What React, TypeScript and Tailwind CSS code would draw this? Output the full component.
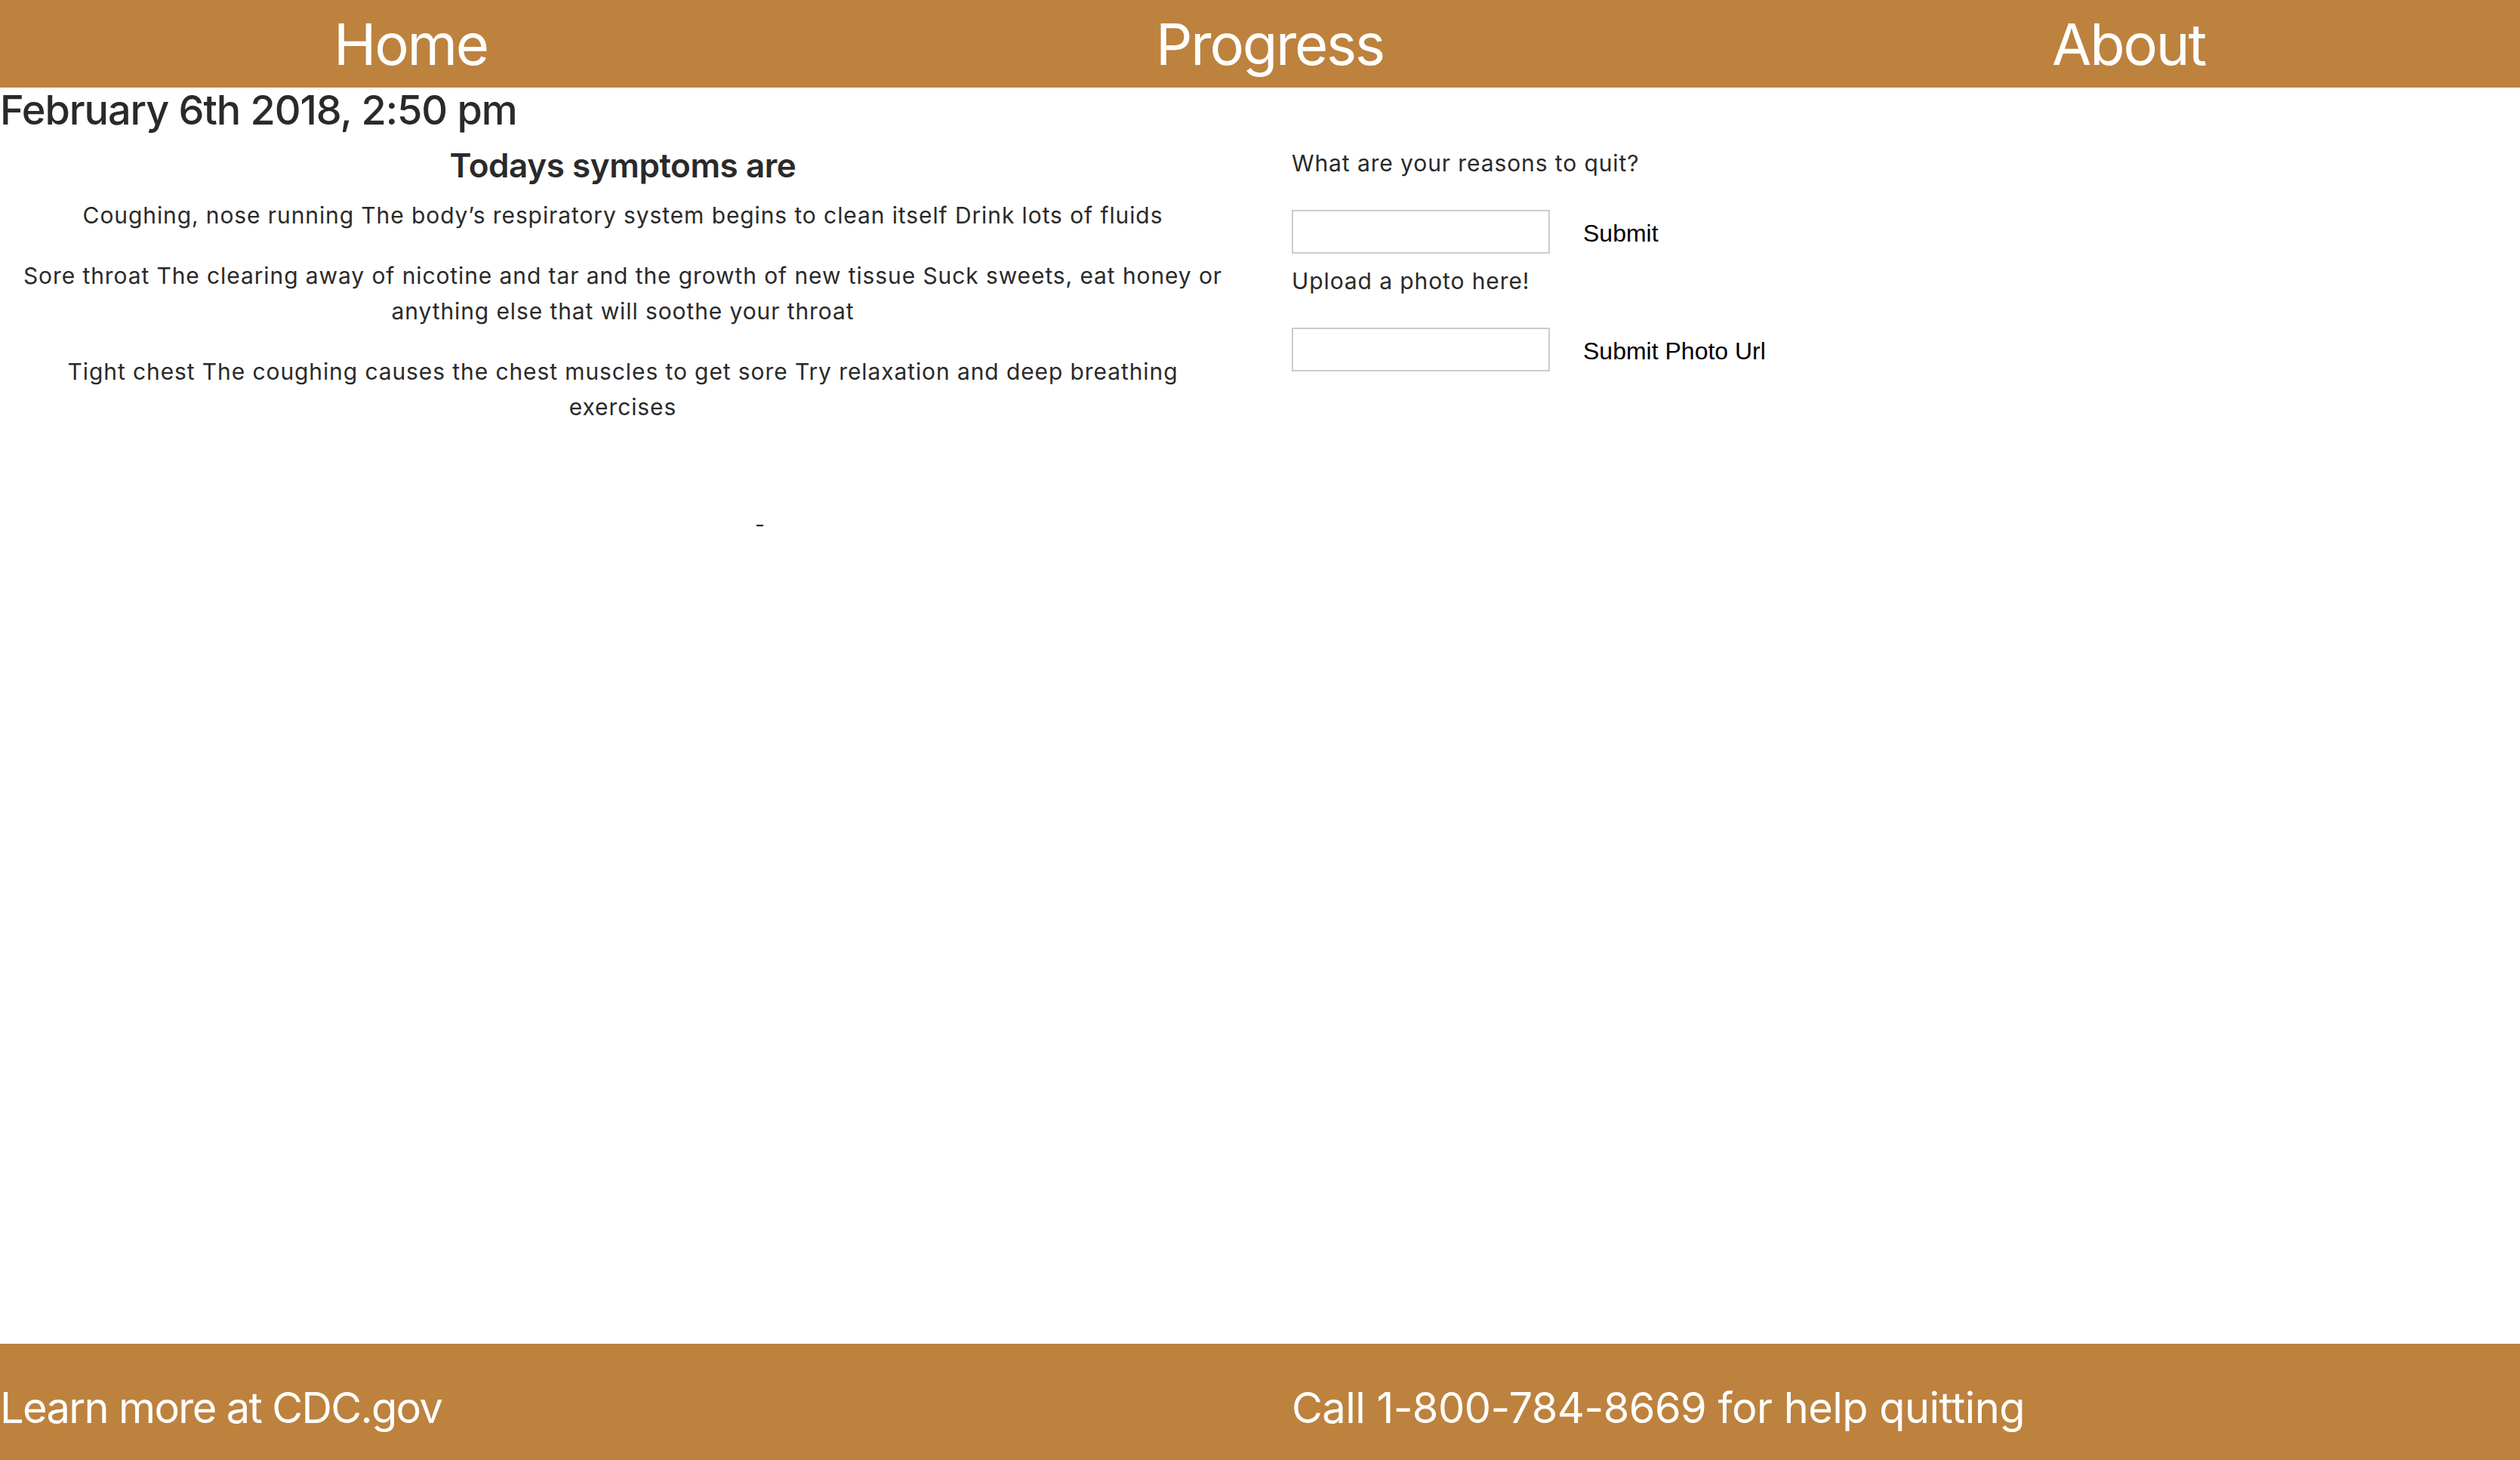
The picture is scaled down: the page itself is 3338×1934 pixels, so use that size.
import React from 'react';

const symptoms = [
  'Coughing, nose running The body’s respiratory system begins to clean itself Drink lots of fluids',
  'Sore throat The clearing away of nicotine and tar and the growth of new tissue Suck sweets, eat honey or anything else that will soothe your throat',
  'Tight chest The coughing causes the chest muscles to get sore Try relaxation and deep breathing exercises',
];

const App: React.FC = () => {
  return (
    <div className="min-h-screen flex flex-col bg-white text-[#2a2a2a] font-['Inter',sans-serif]">
      {/* Nav */}
      <nav className="h-[116px] bg-[#bd823e] flex items-center justify-between pl-[442px] pr-[417px] text-white text-[76px] leading-none tracking-[-0.03em]">
        <a href="#">Home</a>
        <a href="#">Progress</a>
        <a href="#">About</a>
      </nav>

      <main className="flex-1">
        <div className="text-[54px] leading-[60px] font-medium tracking-[-0.02em]">February 6th 2018, 2:50 pm</div>

        <div className="flex">
          {/* Symptoms */}
          <div className="w-[1650px] px-[20px] text-center">
            <h3 className="mt-[17px] text-[44px] leading-[52px] font-semibold tracking-[-0.01em]">Todays symptoms are</h3>
            <div className="mt-[17px] flex flex-col gap-[33px] text-[30px] leading-[47px] tracking-[0.03em]">
              {symptoms.map((s) => (
                <p key={s}>{s}</p>
              ))}
            </div>
            <div className="mt-[109px] text-left pl-[980px] text-[28px] leading-[47px]">-</div>
          </div>

          {/* Reasons */}
          <div className="flex-1 pl-[61px] text-[30px] leading-[47px] tracking-[0.03em]">
            <p className="mt-[17px]">What are your reasons to quit?</p>
            <div className="mt-[38px] flex items-center gap-[44px] tracking-normal">
              <input className="w-[342px] h-[58px] border-2 border-[#cccccc] outline-none" />
              <button className="mt-[4px] text-[32px] text-black font-['Liberation_Sans',sans-serif]">Submit</button>
            </div>
            <p className="mt-[13px]">Upload a photo here!</p>
            <div className="mt-[38px] flex items-center gap-[44px] tracking-normal">
              <input className="w-[342px] h-[58px] border-2 border-[#cccccc] outline-none" />
              <button className="mt-[4px] text-[32px] text-black font-['Liberation_Sans',sans-serif]">Submit Photo Url</button>
            </div>
          </div>
        </div>
      </main>

      {/* Footer */}
      <footer className="h-[154px] bg-[#bd823e] flex text-white text-[56px] leading-[70px] pt-[50px]">
        <div className="w-[1711px] tracking-[-0.03em]">Learn more at CDC.gov</div>
        <div className="flex-1 tracking-[-0.01em]">Call 1-800-784-8669 for help quitting</div>
      </footer>
    </div>
  );
};

export default App;
